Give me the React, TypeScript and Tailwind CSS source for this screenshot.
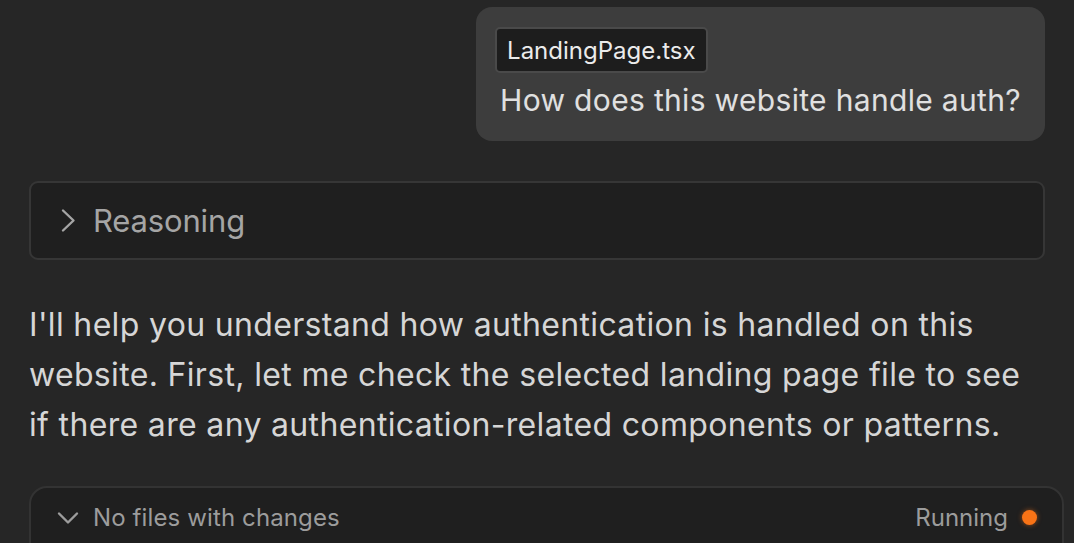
import React from "react";

function ChevronRight() {
  return (
    <svg width="15" height="25" viewBox="0 0 15 25" fill="none" stroke="currentColor" strokeWidth="2.4" strokeLinecap="round" strokeLinejoin="round" className="shrink-0">
      <path d="M2 2.5 L12.5 12.5 L2 22.5" />
    </svg>
  );
}

function ChevronDown() {
  return (
    <svg width="22" height="14" viewBox="0 0 22 14" fill="none" stroke="currentColor" strokeWidth="2.4" strokeLinecap="round" strokeLinejoin="round" className="shrink-0">
      <path d="M2 2.5 L11 11.5 L20 2.5" />
    </svg>
  );
}

export default function App() {
  return (
    <div
      className="w-[1074px] h-[543px] overflow-hidden bg-[#262626] flex flex-col pl-[29px] pr-[29px]"
      style={{ fontFamily: "Inter, 'Noto Sans', sans-serif" }}
    >
      <div className="shrink-0 self-end mt-[7px] bg-[#3d3d3d] rounded-[16px] pl-[19px] pr-[24px] pt-[20px] pb-[22px] flex flex-col items-start">
        <div className="bg-[#1d1d1d] border-2 border-[#4a4a4a] rounded-[5px] pl-[10px] pr-[10px] h-[46px] flex items-center text-[24px] leading-[29px] text-[#ebebeb]">
          LandingPage.tsx
        </div>
        <div className="mt-[8px] pl-[5px] text-[30px] leading-[38px] tracking-[0.011em] text-[#e0e0e0]">
          How does this website handle auth?
        </div>
      </div>

      <div className="shrink-0 mt-[40px] h-[79px] bg-[#1f1f1f] border-2 border-[#363636] rounded-[9px] flex items-center pl-[30px] text-[#a5a5a5]">
        <ChevronRight />
        <span className="ml-[17px] text-[31px] leading-[38px] tracking-[-0.005em]">Reasoning</span>
      </div>

      <p className="shrink-0 mt-[40px] text-[32px] leading-[50px] tracking-[0.0105em] text-[#d6d6d6] whitespace-nowrap">
        I'll help you understand how authentication is handled on this
        <br />
        website. First, let me check the selected landing page file to see
        <br />
        if there are any authentication-related components or patterns.
      </p>

      <div className="shrink-0 mt-[36px] mr-[-19px] h-[90px] bg-[#1f1f1f] border-2 border-[#333333] rounded-[18px] flex items-start pt-[15px] pl-[26px] pr-[25px] text-[#9c9c9c]">
        <div className="h-[29px] flex items-center">
          <ChevronDown />
        </div>
        <span className="ml-[14px] text-[24px] leading-[29px] tracking-[0.005em]">No files with changes</span>
        <span className="ml-auto text-[24px] leading-[29px]">Running</span>
        <div className="h-[29px] flex items-center ml-[14px]">
          <span className="block w-[15px] h-[15px] rounded-full bg-[#f97316] shadow-[0_0_5px_rgba(249,115,22,0.55)]" />
        </div>
      </div>
    </div>
  );
}
